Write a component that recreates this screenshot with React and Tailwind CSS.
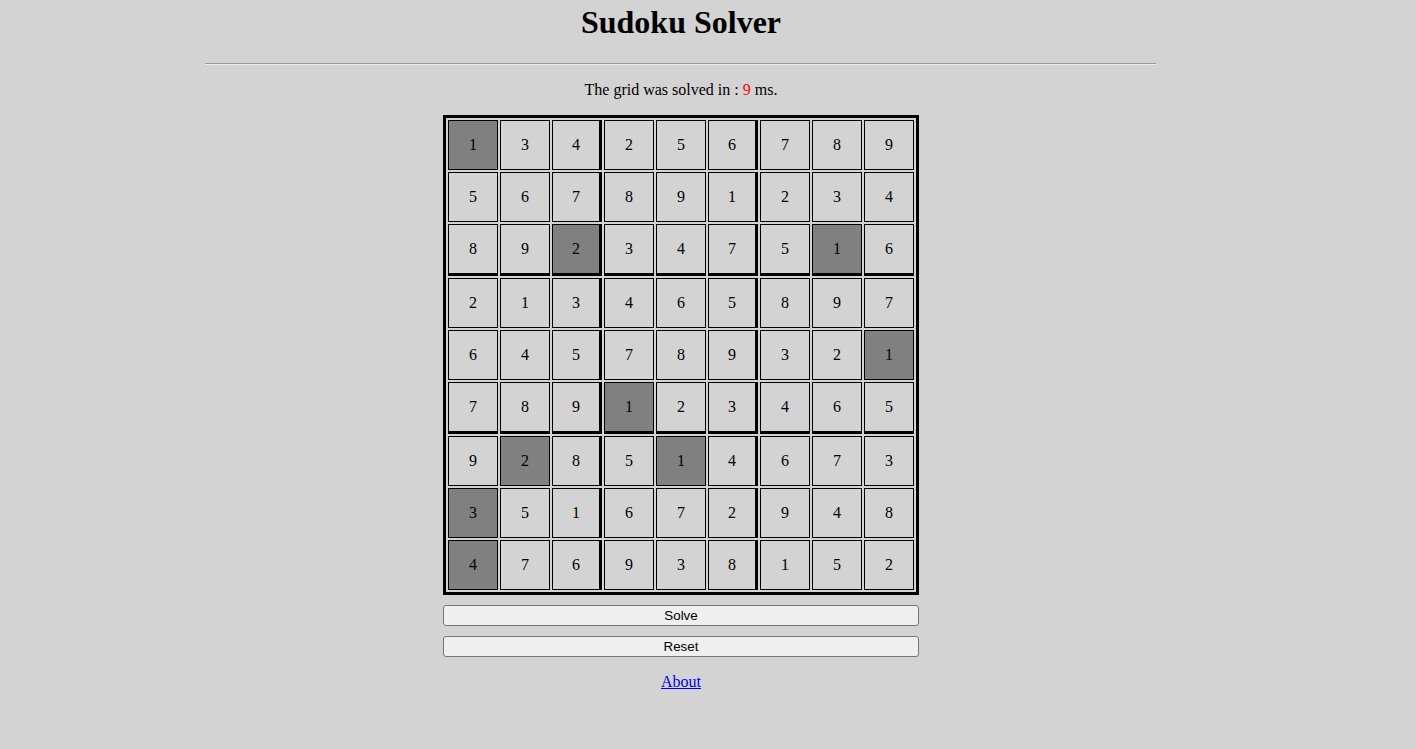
import React from "react";

const grid = [
  [1, 3, 4, 2, 5, 6, 7, 8, 9],
  [5, 6, 7, 8, 9, 1, 2, 3, 4],
  [8, 9, 2, 3, 4, 7, 5, 1, 6],
  [2, 1, 3, 4, 6, 5, 8, 9, 7],
  [6, 4, 5, 7, 8, 9, 3, 2, 1],
  [7, 8, 9, 1, 2, 3, 4, 6, 5],
  [9, 2, 8, 5, 1, 4, 6, 7, 3],
  [3, 5, 1, 6, 7, 2, 9, 4, 8],
  [4, 7, 6, 9, 3, 8, 1, 5, 2],
];

const given = new Set([
  "0-0",
  "2-2",
  "2-7",
  "4-8",
  "5-3",
  "6-1",
  "6-4",
  "7-0",
  "8-0",
]);

function Cell({ r, c, v }) {
  const thickBottom = r === 2 || r === 5;
  const thickRight = c === 2 || c === 5;
  const shaded = given.has(`${r}-${c}`);
  return (
    <div
      className={[
        "flex items-center justify-center border border-black text-[16px] text-black",
        thickBottom ? "h-[52px] border-b-[3px]" : "h-[50px]",
        thickRight ? "border-r-[3px]" : "",
        shaded ? "bg-[#808080]" : "bg-[#d3d3d3]",
      ].join(" ")}
    >
      {v}
    </div>
  );
}

export default function App() {
  return (
    <div className="min-h-[749px] w-full bg-[#d3d3d3] font-['Liberation_Serif',serif] text-black">
      <div className="flex w-[1362px] flex-col items-center">
        <h1 className="mt-[4px] text-[32px] font-bold leading-[37px]">Sudoku Solver</h1>
        <div className="mt-[22px] ml-[205px] h-[2px] w-[951px] self-start border-t border-b border-t-[#9a9a9a] border-b-[#eeeeee]" />
        <p className="mt-[16px] text-[16px] leading-[18px]">
          The grid was solved in : <span className="text-[#ff0000]">9</span> ms.
        </p>
        <div className="mt-[16px] grid w-[476px] grid-cols-[repeat(9,50px)] gap-[2px] border-[3px] border-black p-[2px]">
          {grid.map((row, r) =>
            row.map((v, c) => <Cell key={`${r}-${c}`} r={r} c={c} v={v} />)
          )}
        </div>
        <button className="mt-[10px] h-[21px] w-[476px] rounded-[3px] border border-[#767676] bg-[#efefef] font-['Liberation_Sans',Arial,sans-serif] text-[13.33px] leading-[15px] text-black">
          Solve
        </button>
        <button className="mt-[10px] h-[21px] w-[476px] rounded-[3px] border border-[#767676] bg-[#efefef] font-['Liberation_Sans',Arial,sans-serif] text-[13.33px] leading-[15px] text-black">
          Reset
        </button>
        <a href="#" className="mt-[16px] text-[16px] leading-[18px] text-[#0000ee] underline">
          About
        </a>
      </div>
    </div>
  );
}
